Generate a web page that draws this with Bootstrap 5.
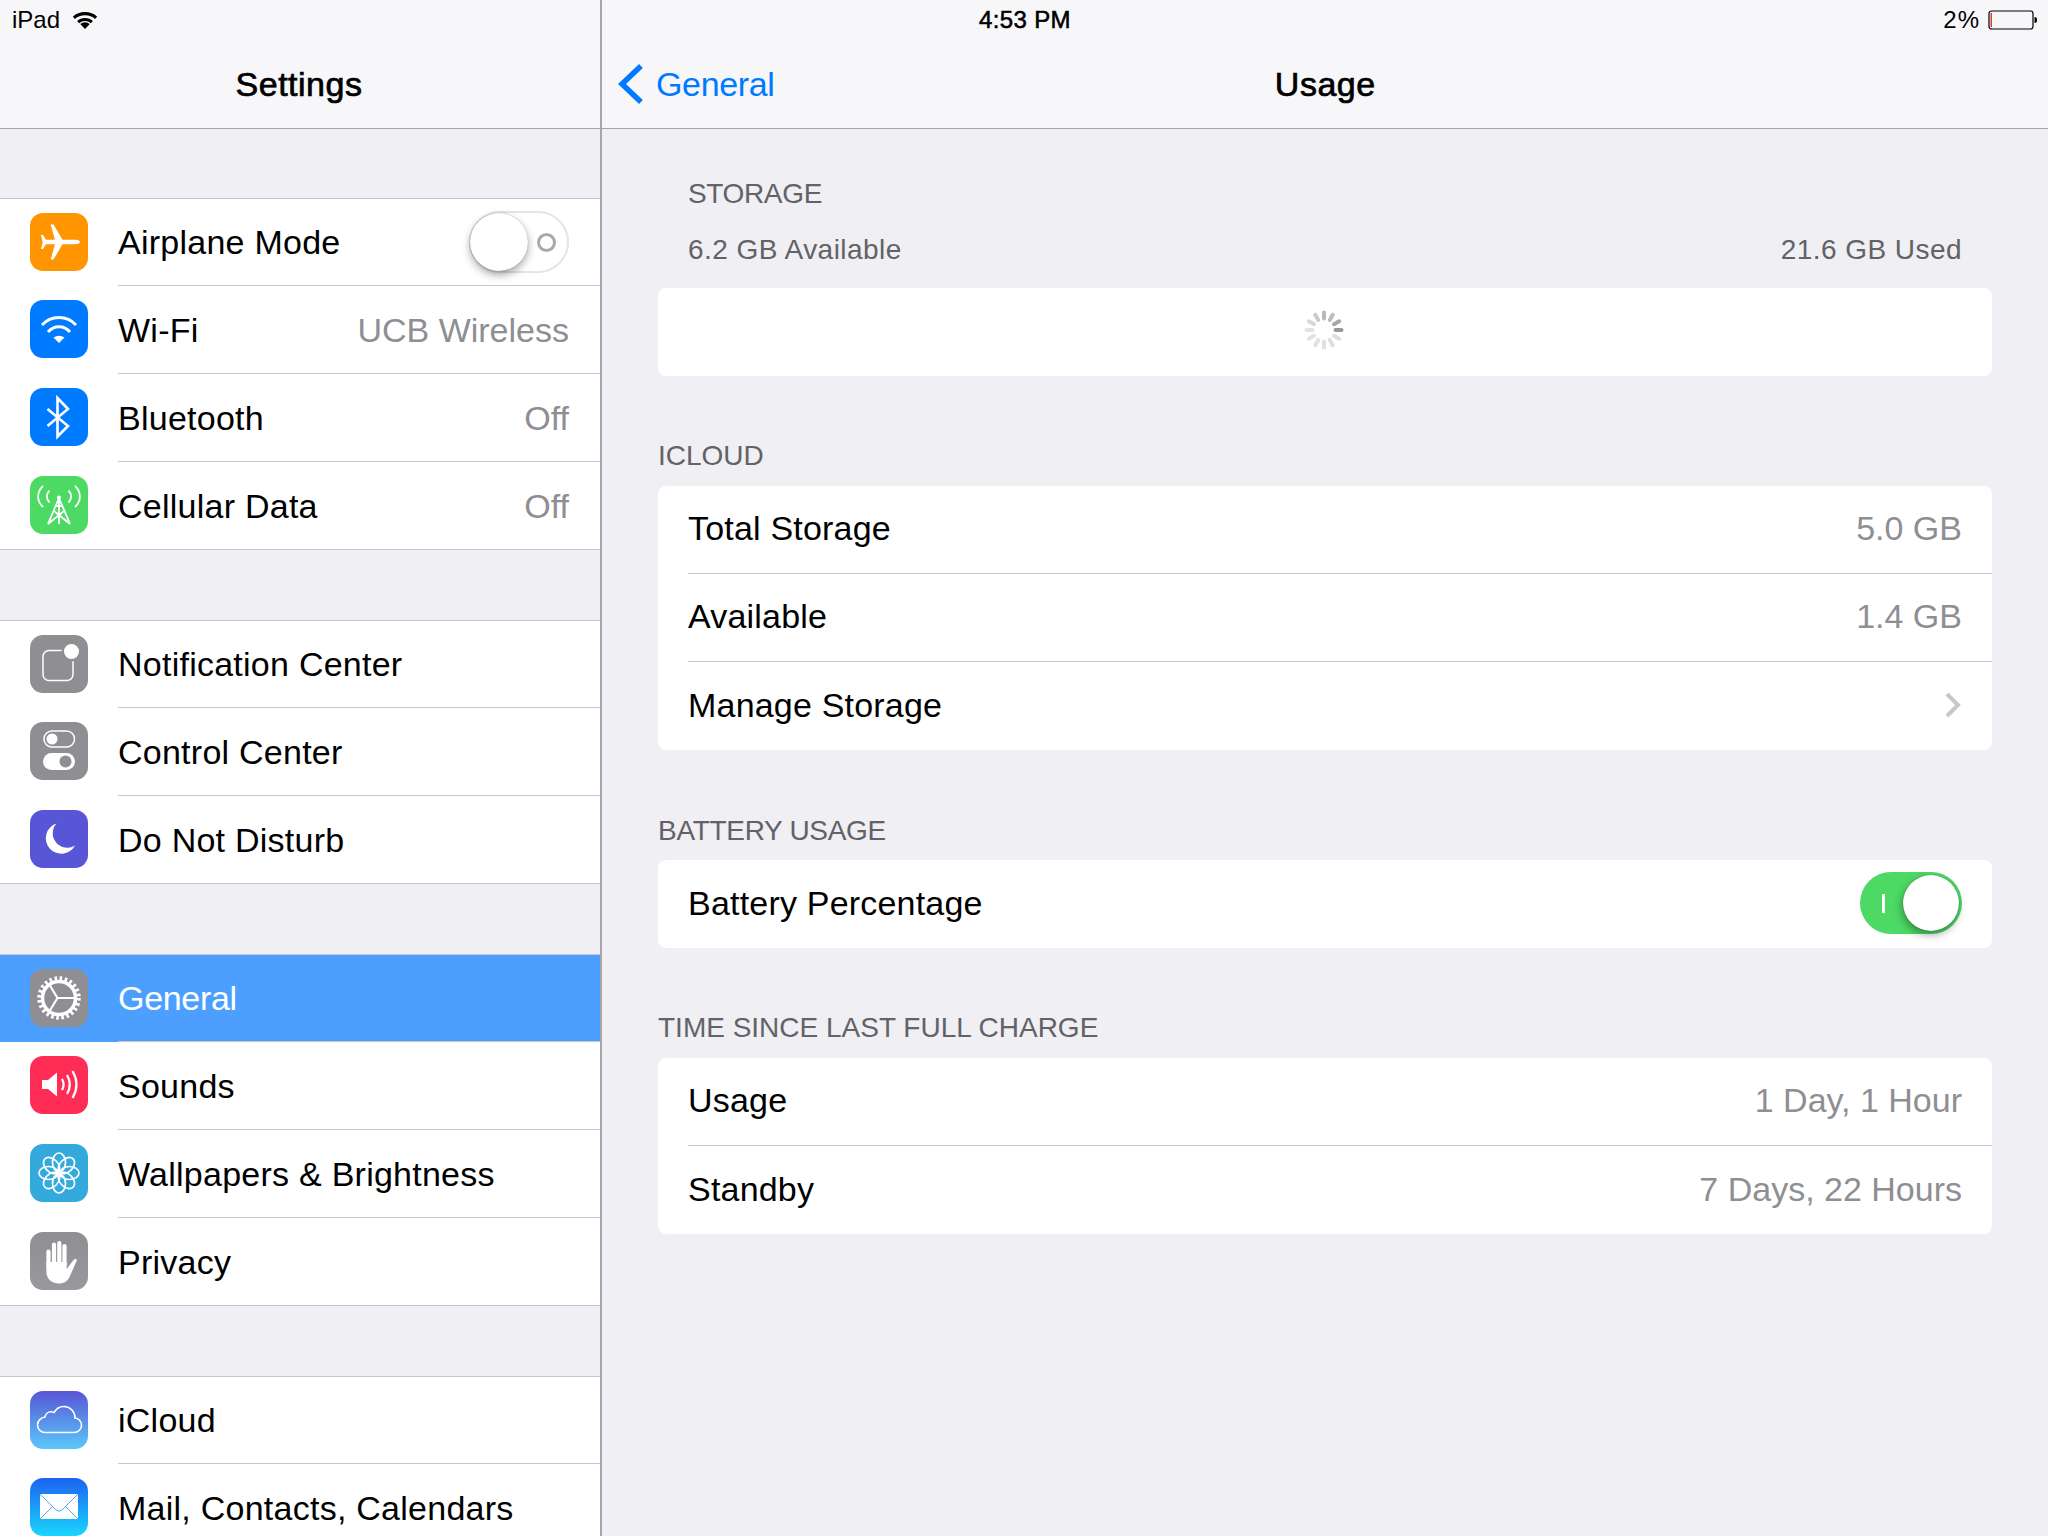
<!DOCTYPE html>
<html lang="en">
<head>
<meta charset="utf-8">
<title>Settings - Usage</title>
<link href="https://cdn.jsdelivr.net/npm/bootstrap@5.3.0/dist/css/bootstrap.min.css" rel="stylesheet">
<style>
html,body{height:100%;overflow:hidden}
body{background:#efeff4;font-family:"Liberation Sans",Arial,sans-serif;color:#000;position:relative}
.stage{width:2048px;height:1536px}
.status-over{position:absolute;left:0;top:0;width:2048px;height:40px;font-size:24px;line-height:40px;padding:0 10px 0 12px;z-index:5}
.status-l,.status-r{width:300px}
.status-c{letter-spacing:.35px;-webkit-text-stroke:.55px #000}
.pct{letter-spacing:1px}
.side{width:602px;flex:none;background:#efeff4;border-right:2px solid #a7a7ab;overflow:hidden}
.main-pane{flex:1 1 auto;min-width:0}
.topbar{height:129px;background:#f7f7f9;border-bottom:1px solid #a7a7ab;padding-top:40px;font-size:34px;position:relative}
.side-bar{justify-content:center;padding-right:2px}
.top-title{font-size:34px;letter-spacing:.5px;-webkit-text-stroke:.7px #000;line-height:88px}
.back-link{color:#007aff;font-size:34px;letter-spacing:-.35px;padding-left:14px;gap:12px;text-decoration:none;line-height:88px}
.main-bar{padding-right:70px}
.main-title-wrap{flex:1 1 auto;text-align:center;padding-right:102px}
.menu-grp{margin-top:70px;background:#fff;border-top:1px solid #c8c7cc;--bs-list-group-border-width:0;border-radius:0}
.menu-grp.first-grp{margin-top:69px}
.menu-item{height:88px;display:flex;align-items:stretch;font-size:34px;letter-spacing:.25px;padding:0;border:0;background:#fff;color:#000;border-radius:0}
.menu-item:first-child{height:87px}
.menu-item.sel{background:#4c9ffe;color:#fff;letter-spacing:-.3px}
.ico-wrap{width:118px;flex:none;display:flex;align-items:center;padding:0 0 2px 30px}
.menu-item svg.ico{width:58px;height:58px;display:block}
.menu-body{flex:1 1 auto;display:flex;align-items:center;justify-content:space-between;padding-right:31px;border-bottom:1px solid #c8c7cc}
.menu-item:not(:first-child) .menu-body{padding-top:2px}
.menu-item:last-child{border-bottom:1px solid #c8c7cc}
.menu-item:last-child .menu-body{border-bottom:0}
.dim{color:#8e8e93;letter-spacing:0}
.content-pane{padding:0 56px}
.sec-lbl{font-size:28px;color:#626267;line-height:32px;text-transform:uppercase}
.sec-storage{padding:0 30px;margin-top:49px;letter-spacing:-.35px}
.storage-line{padding:0 30px;margin-top:24px;font-size:28px;letter-spacing:.45px;color:#626267;line-height:32px}
.panel-box{background:#fff;border-radius:8px;overflow:hidden}
.panel-box .row-line{height:88px;display:flex;align-items:center;justify-content:space-between;padding:0 30px 2px;font-size:34px;letter-spacing:.2px}
.panel-box .row-line.short-line{height:87px}
.row-sep{border-bottom:1px solid #c8c7cc;margin-left:30px;height:1px}
.sp1{margin-top:22px;height:88px;display:flex;align-items:center;justify-content:center;padding:0 2px 4px 0}
.lbl1{margin-top:64px}
.lbl2{margin-top:65px;letter-spacing:-.3px}
.lbl3{margin-top:64px}
.gap-lbl{margin-bottom:14px}
.gap-lbl.tight{margin-bottom:13px}
.sw-off{width:100px;height:62px;border-radius:31px;border:2px solid #e5e5e5;position:relative;background:#fff}
.sw-off .knob{position:absolute;left:-1px;top:0;width:58px;height:58px;border-radius:50%;background:#fff;box-shadow:0 4px 8px rgba(0,0,0,.35),0 0 1px rgba(0,0,0,.4)}
.sw-off .ring{position:absolute;right:11px;top:20px;width:19px;height:19px;border-radius:50%;border:3px solid #a9a9ad}
.sw-on{width:102px;height:62px;border-radius:31px;background:#4cd964;position:relative}
.sw-on .knob{position:absolute;right:3px;top:3px;width:56px;height:56px;border-radius:50%;background:#fff;box-shadow:-1px 4px 8px rgba(0,0,0,.35),0 0 1px rgba(0,0,0,.5)}
.sw-on .bar{position:absolute;left:22px;top:22px;width:3px;height:19px;background:#fff}
</style>
</head>
<body>
<div class="status-over d-flex justify-content-between align-items-center">
  <div class="status-l d-flex align-items-center gap-2">iPad
    <svg width="26" height="19" viewBox="0 0 24 18" class="ms-1"><path d="M1.500 6.500C7 1.200 17 1.200 22.500 6.500M5.500 10.500C9 7.200 15 7.200 18.500 10.500" fill="none" stroke="#000" stroke-width="3"/><path d="M7.500 12.200q4.500-3 9 0L12 17z" fill="#000"/></svg>
  </div>
  <div class="status-c">4:53 PM</div>
  <div class="status-r d-flex justify-content-end align-items-center gap-2"><span class="pct">2%</span>
    <svg width="50" height="20" viewBox="0 0 50 20"><rect x="1" y="1" width="44" height="18" rx="2.500" fill="none" stroke="#000" stroke-width="1.200"/><rect x="2.500" y="3" width="1.500" height="14" fill="#d0443a"/><path d="M46.500 7c2 0 2.500 1 2.500 3s-.5 3-2.500 3z" fill="#000"/></svg>
  </div>
</div>

<div class="stage d-flex">
  <div class="side">
    <div class="topbar side-bar d-flex"><div class="top-title">Settings</div></div>

    <div class="list-group menu-grp first-grp">
      <div class="list-group-item menu-item">
        <div class="ico-wrap"><svg class="ico" viewBox="0 0 58 58"><rect width="58" height="58" rx="13" fill="#ff9500"/><path d="M50 29c0-1.200-2-2.200-4-2.200H32.500L23.500 11.500h-2.800l4.200 15.300H16L13 22h-2l1.700 7-1.700 7h2l3-4.800h8.900L20.700 46.500h2.800l9-15.300H46c2 0 4-1 4-2.200z" fill="#fff"/></svg></div>
        <div class="menu-body"><span>Airplane Mode</span><div class="sw-off"><span class="knob"></span><span class="ring"></span></div></div>
      </div>
      <div class="list-group-item menu-item">
        <div class="ico-wrap"><svg class="ico" viewBox="0 0 58 58"><rect width="58" height="58" rx="13" fill="#007aff"/><path d="M12 25C21 15 37 15 46 25M18 32C24 25 34 25 40 32" fill="none" stroke="#fff" stroke-width="3"/><path d="M23.500 37.500q5.500-3.500 11 0L29 43z" fill="#fff"/></svg></div>
        <div class="menu-body"><span>Wi-Fi</span><span class="dim">UCB Wireless</span></div>
      </div>
      <div class="list-group-item menu-item">
        <div class="ico-wrap"><svg class="ico" viewBox="0 0 58 58"><rect width="58" height="58" rx="13" fill="#007aff"/><path d="M17.500 21L38 38 27.500 48.500V10L38 21 17.500 38" fill="none" stroke="#fff" stroke-width="2.600"/></svg></div>
        <div class="menu-body"><span>Bluetooth</span><span class="dim">Off</span></div>
      </div>
      <div class="list-group-item menu-item">
        <div class="ico-wrap"><svg class="ico" viewBox="0 0 58 58"><rect width="58" height="58" rx="13" fill="#4cd964"/><g fill="none" stroke="#fff" stroke-width="1.800"><path d="M13 10C6.500 16 6.500 25 13 31M19.500 14.500C16 18 16 23 19.500 26.500M45 10c6.500 6 6.500 15 0 21M38.500 14.500c3.500 3.500 3.500 8.500 0 12"/><path d="M29 22v26M29 22L18 48M29 22l11 26M24 35l16 13M34 35L18 48M25.500 30h7"/></g><circle cx="29" cy="21.500" r="2" fill="#fff"/></svg></div>
        <div class="menu-body"><span>Cellular Data</span><span class="dim">Off</span></div>
      </div>
    </div>

    <div class="list-group menu-grp">
      <div class="list-group-item menu-item">
        <div class="ico-wrap"><svg class="ico" viewBox="0 0 58 58"><rect width="58" height="58" rx="13" fill="#8e8e93"/><rect x="13" y="15.500" width="30" height="30" rx="6" fill="none" stroke="#fff" stroke-width="1.500"/><circle cx="41.500" cy="16.500" r="10" fill="#8e8e93"/><circle cx="41.500" cy="16.500" r="7.500" fill="#fff"/></svg></div>
        <div class="menu-body"><span>Notification Center</span></div>
      </div>
      <div class="list-group-item menu-item">
        <div class="ico-wrap"><svg class="ico" viewBox="0 0 58 58"><rect width="58" height="58" rx="13" fill="#8e8e93"/><rect x="14" y="9" width="30.500" height="16" rx="8" fill="none" stroke="#fff" stroke-width="1.500"/><circle cx="22" cy="17" r="5.500" fill="#fff"/><rect x="13" y="31" width="32" height="17" rx="8.500" fill="#fff"/><circle cx="35.500" cy="39.500" r="6" fill="#8e8e93"/></svg></div>
        <div class="menu-body"><span>Control Center</span></div>
      </div>
      <div class="list-group-item menu-item">
        <div class="ico-wrap"><svg class="ico" viewBox="0 0 58 58"><rect width="58" height="58" rx="13" fill="#5856d6"/><path d="M26.500 13.500A15.500 15.500 0 1 0 45 35.500 14.500 14.500 0 0 1 26.500 13.500z" fill="#fff"/></svg></div>
        <div class="menu-body"><span>Do Not Disturb</span></div>
      </div>
    </div>

    <div class="list-group menu-grp">
      <div class="list-group-item menu-item sel">
        <div class="ico-wrap"><svg class="ico" viewBox="0 0 58 58"><rect width="58" height="58" rx="13" fill="#8e8e93"/><circle cx="29" cy="29" r="19" fill="none" stroke="#fff" stroke-width="5.500" stroke-dasharray="2.500 2.475"/><circle cx="29" cy="29" r="16.500" fill="none" stroke="#fff" stroke-width="3.500"/><path d="M27.500 29H46M27.500 29L19 15M27.500 29L19 43" fill="none" stroke="#fff" stroke-width="2.200"/></svg></div>
        <div class="menu-body"><span>General</span></div>
      </div>
      <div class="list-group-item menu-item">
        <div class="ico-wrap"><svg class="ico" viewBox="0 0 58 58"><rect width="58" height="58" rx="13" fill="#ff2d55"/><path d="M12 24h6l9-7.500v24L18 33h-6z" fill="#fff"/><g fill="none" stroke="#fff" stroke-width="2.200"><path d="M32 23c2 3.500 2 7.500 0 11M37 19c3.500 6 3.500 13 0 19M42.500 15c5 8.500 5 18.500 0 27"/></g></svg></div>
        <div class="menu-body"><span>Sounds</span></div>
      </div>
      <div class="list-group-item menu-item">
        <div class="ico-wrap"><svg class="ico" viewBox="0 0 58 58"><rect width="58" height="58" rx="13" fill="#34aadc"/><g fill="none" stroke="#fff" stroke-width="1.700"><ellipse cx="29" cy="18.500" rx="6.500" ry="9.500"/><ellipse cx="29" cy="18.500" rx="6.500" ry="9.500" transform="rotate(45 29 29)"/><ellipse cx="29" cy="18.500" rx="6.500" ry="9.500" transform="rotate(90 29 29)"/><ellipse cx="29" cy="18.500" rx="6.500" ry="9.500" transform="rotate(135 29 29)"/><ellipse cx="29" cy="18.500" rx="6.500" ry="9.500" transform="rotate(180 29 29)"/><ellipse cx="29" cy="18.500" rx="6.500" ry="9.500" transform="rotate(225 29 29)"/><ellipse cx="29" cy="18.500" rx="6.500" ry="9.500" transform="rotate(270 29 29)"/><ellipse cx="29" cy="18.500" rx="6.500" ry="9.500" transform="rotate(315 29 29)"/></g><circle cx="29" cy="29" r="3.500" fill="#fff"/></svg></div>
        <div class="menu-body"><span>Wallpapers &amp; Brightness</span></div>
      </div>
      <div class="list-group-item menu-item">
        <div class="ico-wrap"><svg class="ico" viewBox="0 0 58 58"><defs><linearGradient id="gp" x1="0" y1="0" x2="0" y2="1"><stop offset="0" stop-color="#8e8e93"/><stop offset="1" stop-color="#98989d"/></linearGradient></defs><rect width="58" height="58" rx="13" fill="url(#gp)"/><path d="M18.500 19.500V34M24 12.500V32M29.300 11V32M34.500 14V33" fill="none" stroke="#fff" stroke-width="4.200" stroke-linecap="round"/><path d="M16.400 30H36.600V37L44 27.500c1-1.200 3.300-.5 2.800 1L40 44c-2 5-6 7.500-11 7.500-8 0-12.600-5-12.600-12z" fill="#fff"/></svg></div>
        <div class="menu-body"><span>Privacy</span></div>
      </div>
    </div>

    <div class="list-group menu-grp">
      <div class="list-group-item menu-item">
        <div class="ico-wrap"><svg class="ico" viewBox="0 0 58 58"><defs><linearGradient id="gc" x1="0" y1="0" x2="0" y2="1"><stop offset="0" stop-color="#5856d6"/><stop offset="1" stop-color="#5ac8fa"/></linearGradient></defs><rect width="58" height="58" rx="13" fill="url(#gc)"/><path d="M15 41.500h29c4 0 7.500-3 7.500-7.200 0-4-3-7-6.500-7.300 0-6.500-5-11.500-11-11.500-4.500 0-8 2.500-10 6-1-.5-2-.8-3-.8-3 0-5.500 2.300-6 5.300-4 .7-7.500 3.800-7.500 8 0 4.500 3.500 7.500 7.500 7.500z" fill="none" stroke="#fff" stroke-width="1.600"/></svg></div>
        <div class="menu-body"><span>iCloud</span></div>
      </div>
      <div class="list-group-item menu-item">
        <div class="ico-wrap"><svg class="ico" viewBox="0 0 58 58"><defs><linearGradient id="gm" x1="0" y1="0" x2="0" y2="1"><stop offset="0" stop-color="#1d62f0"/><stop offset="1" stop-color="#1ad6fd"/></linearGradient></defs><rect width="58" height="58" rx="13" fill="url(#gm)"/><rect x="10" y="16" width="38" height="25" fill="#fff"/><path d="M10 16l16 16q3 2.500 6 0L48 16M10 41l13-13M48 41L35 28" fill="none" stroke="#3f9cf5" stroke-width=".9"/></svg></div>
        <div class="menu-body"><span>Mail, Contacts, Calendars</span></div>
      </div>
    </div>
  </div>

  <div class="main-pane">
    <div class="topbar main-bar d-flex align-items-start">
      <a class="back-link d-flex align-items-center" href="#">
        <svg width="28" height="42" viewBox="0 0 28 42"><path d="M25 3L6 21l19 18" fill="none" stroke="#007aff" stroke-width="5.500"/></svg>
        <span>General</span>
      </a>
      <div class="main-title-wrap"><span class="top-title">Usage</span></div>
    </div>
    <div class="content-pane">
      <div class="sec-lbl sec-storage">Storage</div>
      <div class="storage-line d-flex justify-content-between"><span>6.2 GB Available</span><span>21.6 GB Used</span></div>
      <div class="panel-box sp1">
        <svg width="42" height="42" viewBox="0 0 42 42"><g stroke-width="4" stroke-linecap="round">
          <path d="M21 3.500v6" stroke="#b8b8b8"/><path d="M21 3.500v6" stroke="#bdbdbd" transform="rotate(30 21 21)"/><path d="M21 3.500v6" stroke="#a8a8a8" transform="rotate(60 21 21)"/><path d="M21 3.500v6" stroke="#999" transform="rotate(90 21 21)"/><path d="M21 3.500v6" stroke="#dedede" transform="rotate(120 21 21)"/><path d="M21 3.500v6" stroke="#dedede" transform="rotate(150 21 21)"/><path d="M21 3.500v6" stroke="#e0e0e0" transform="rotate(180 21 21)"/><path d="M21 3.500v6" stroke="#e0e0e0" transform="rotate(210 21 21)"/><path d="M21 3.500v6" stroke="#e2e2e2" transform="rotate(240 21 21)"/><path d="M21 3.500v6" stroke="#e2e2e2" transform="rotate(270 21 21)"/><path d="M21 3.500v6" stroke="#d8d8d8" transform="rotate(300 21 21)"/><path d="M21 3.500v6" stroke="#cacaca" transform="rotate(330 21 21)"/>
        </g></svg>
      </div>

      <div class="sec-lbl lbl1 gap-lbl">iCloud</div>
      <div class="panel-box">
        <div class="row-line short-line"><span>Total Storage</span><span class="dim">5.0 GB</span></div>
        <div class="row-sep"></div>
        <div class="row-line short-line"><span>Available</span><span class="dim">1.4 GB</span></div>
        <div class="row-sep"></div>
        <div class="row-line"><span>Manage Storage</span><svg width="18" height="26" viewBox="0 0 18 26"><path d="M3 2l11 11L3 24" fill="none" stroke="#c7c7cc" stroke-width="4"/></svg></div>
      </div>

      <div class="sec-lbl lbl2 gap-lbl tight">Battery Usage</div>
      <div class="panel-box">
        <div class="row-line"><span>Battery Percentage</span><div class="sw-on"><span class="bar"></span><span class="knob"></span></div></div>
      </div>

      <div class="sec-lbl lbl3 gap-lbl">Time Since Last Full Charge</div>
      <div class="panel-box">
        <div class="row-line short-line"><span>Usage</span><span class="dim">1 Day, 1 Hour</span></div>
        <div class="row-sep"></div>
        <div class="row-line"><span>Standby</span><span class="dim">7 Days, 22 Hours</span></div>
      </div>
    </div>
  </div>
</div>
<script src="https://cdn.jsdelivr.net/npm/bootstrap@5.3.0/dist/js/bootstrap.bundle.min.js"></script>
</body>
</html>
